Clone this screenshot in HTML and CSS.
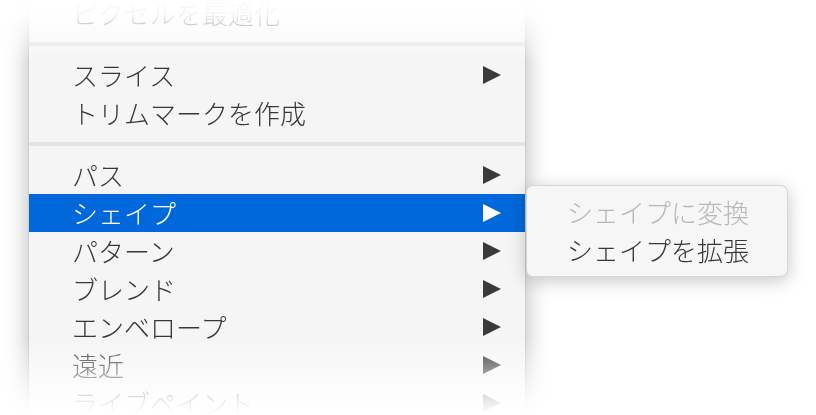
FILE: index.html
```html
<!DOCTYPE html>
<html lang="ja">
<head>
    <meta charset="UTF-8">
    <title>オブジェクト メニュー</title>
    <link rel="stylesheet" href="styles.css">
</head>
<body>

<div class="scene">
    <!-- メインメニュー -->
    <ul class="menu">
        <li class="item">ピクセルを最適化</li>
        <li class="sep"></li>
        <li class="item has-sub">スライス<span class="arrow"></span></li>
        <li class="item">トリムマークを作成</li>
        <li class="sep"></li>
        <li class="item has-sub">パス<span class="arrow"></span></li>
        <li class="item has-sub active">シェイプ<span class="arrow"></span></li>
        <li class="item has-sub">パターン<span class="arrow"></span></li>
        <li class="item has-sub">ブレンド<span class="arrow"></span></li>
        <li class="item has-sub">エンベロープ<span class="arrow"></span></li>
        <li class="item has-sub">遠近<span class="arrow"></span></li>
        <li class="item has-sub">ライブペイント<span class="arrow"></span></li>
    </ul>

    <!-- サブメニュー（シェイプ） -->
    <ul class="submenu">
        <li class="item disabled">シェイプに変換</li>
        <li class="item">シェイプを拡張</li>
    </ul>
</div>

</body>
</html>
```

FILE: styles.css
```css
html, body {
    margin: 0;
    height: 415px;
    overflow: hidden;
    background-color: #fff;
}
body {
    font-family: "Noto Sans CJK JP", "Noto Sans", sans-serif;
    font-size: 26px;
    font-weight: 300;
    color: #383838;
}
ul {
    list-style: none;
    margin: 0;
}
.scene {
    display: flex;
    align-items: flex-start;
    height: 415px;
    -webkit-mask-image: linear-gradient(to bottom, rgba(0,0,0,0.02) 0px, rgba(0,0,0,0.06) 14px, rgba(0,0,0,0.5) 40px, #000 62px, #000 338px, rgba(0,0,0,0.62) 365px, rgba(0,0,0,0.1) 402px, transparent 415px);
    mask-image: linear-gradient(to bottom, rgba(0,0,0,0.02) 0px, rgba(0,0,0,0.06) 14px, rgba(0,0,0,0.5) 40px, #000 62px, #000 338px, rgba(0,0,0,0.62) 365px, rgba(0,0,0,0.1) 402px, transparent 415px);
}
.menu {
    width: 496px;
    margin: -15px 0 0 28px;
    padding: 8px 0;
    background-color: #f5f5f5;
    border: 1px solid rgba(0,0,0,0.16);
    box-shadow: 0 0 22px rgba(0,0,0,0.28);
}
.item {
    display: flex;
    align-items: center;
    justify-content: space-between;
    height: 38px;
    line-height: 36px;
    padding: 0 24px 0 43px;
    white-space: nowrap;
}
.sep {
    height: 4px;
    margin: 10px 0;
    background-color: #e4e4e4;
}
.arrow {
    width: 0;
    height: 0;
    border-left: 18px solid #3a3a3a;
    border-top: 9.5px solid transparent;
    border-bottom: 9.5px solid transparent;
}
.active {
    background-color: #0068da;
    color: #fff;
}
.active .arrow {
    border-left-color: #fff;
}
.submenu {
    width: 260px;
    margin-top: 185px;
    padding: 7px 0;
    background-color: #f6f6f6;
    border: 1px solid rgba(0,0,0,0.13);
    border-radius: 7px;
    box-shadow: 0 4px 18px rgba(0,0,0,0.22);
}
.submenu .item {
    padding: 0 20px 0 40px;
}
.disabled {
    color: #b7b7b7;
}
```
